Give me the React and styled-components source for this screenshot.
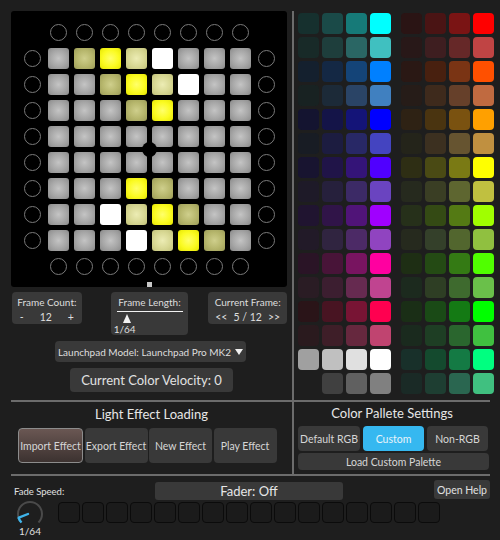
import React from "react";
import styled, { createGlobalStyle } from "styled-components";

const GlobalStyle = createGlobalStyle`
  body {
    margin: 0;
    background: #1e1e1e;
    font-family: Lato, "Liberation Sans", sans-serif;
    color: #dcdcdc;
  }
`;

// pad codes: G gray, W white, 1 dim yellow, 2 light yellow, 3 bright yellow
const PADS = [
  "G132WGGG",
  "GG132WGG",
  "GGG13GGG",
  "GGGGGGGG",
  "GGGGGGGG",
  "GGG31GGG",
  "GGW231GG",
  "GGGW231G",
];

const PAD_BG = {
  G: "radial-gradient(circle, #c4c4c4 0%, #a6a6a6 55%, #898989 100%)",
  W: "#ffffff",
  1: "radial-gradient(circle, #cfcf8c 0%, #b6b66c 55%, #9c9c58 100%)",
  2: "radial-gradient(circle, #ececb4 0%, #d8d894 55%, #c2c27a 100%)",
  3: "radial-gradient(circle, #ffff6a 0%, #fbfb22 55%, #e6e600 100%)",
};

const PALETTE = [
  ["#16302e", "#1a4a48", "#167a78", "#00ffff", "#2a1414", "#4a1414", "#7a1414", "#ff0000"],
  ["#182a28", "#1e3e3c", "#2a6664", "#40c0c0", "#281818", "#3e1e20", "#662828", "#c04444"],
  ["#14202e", "#142844", "#144478", "#0080ff", "#2a1814", "#48200f", "#7a3414", "#ff5000"],
  ["#182222", "#1c2a38", "#2a4466", "#4080c0", "#261c18", "#3e2a1c", "#66402a", "#c06a40"],
  ["#141430", "#141448", "#141478", "#0000ff", "#2e2214", "#4a3410", "#7a5210", "#ffa000"],
  ["#181c24", "#1c1c40", "#282866", "#4444c0", "#24241a", "#3c3020", "#665430", "#c09040"],
  ["#181430", "#201448", "#341478", "#5000ff", "#2e2e14", "#4a4a14", "#7a7a14", "#ffff00"],
  ["#1e1a28", "#26203c", "#3c2a66", "#6a44c0", "#262a1e", "#3a3e24", "#5e6630", "#c0c040"],
  ["#201430", "#301448", "#501478", "#a000ff", "#26301a", "#344a14", "#547a14", "#a0ff00"],
  ["#221a28", "#302440", "#4c2a66", "#9044c0", "#262a1e", "#34402a", "#52662e", "#90c040"],
  ["#2a1426", "#481438", "#781460", "#ff00a0", "#1e2e14", "#244a14", "#347a14", "#50ff00"],
  ["#2a1c24", "#3c1e30", "#662a50", "#c04490", "#1c2a1e", "#2e3e24", "#3e6a2e", "#6ac04a"],
  ["#2a1418", "#481422", "#781434", "#ff0050", "#1a2e16", "#1a4a16", "#147a14", "#00ff00"],
  ["#2a1a1e", "#3e1e28", "#66283e", "#c04470", "#1a2a1e", "#1e3e24", "#2a662e", "#40c040"],
  ["#a0a0a0", "#c0c0c0", "#e0e0e0", "#ffffff", "#18302a", "#144a2e", "#147a44", "#00ff80"],
  [null, "#404040", "#606060", "#808080", "#1a2a26", "#1e3e32", "#2a6650", "#40c080"],
];

const Page = styled.div`
  width: 500px;
  height: 540px;
  overflow: hidden;
  background: #1e1e1e;
`;

const Top = styled.div`
  display: flex;
  height: 389px;
  padding: 11px 0 0 11px;
`;

const LeftCol = styled.div`
  width: 276px;
  display: flex;
  flex-direction: column;
`;

const GridPanel = styled.div`
  position: relative;
  width: 260px;
  height: 260px;
  padding: 8px;
  background: #000;
  border-radius: 3px;
  display: grid;
  grid-template-columns: repeat(10, 26px);
  grid-template-rows: repeat(10, 26px);
`;

const Cell = styled.div`
  display: flex;
  align-items: center;
  justify-content: center;
`;

const Ring = styled.div`
  width: 15px;
  height: 15px;
  border-radius: 50%;
  border: 1px solid #7a7a7a;
`;

const Pad = styled.div`
  width: 21px;
  height: 21px;
  border-radius: 3px;
  background: ${(p) => p.$bg};
`;

const CenterHole = styled.div`
  position: absolute;
  left: 130.5px;
  top: 130.5px;
  width: 15px;
  height: 15px;
  border-radius: 50%;
  background: #000;
`;

const Marker = styled.div`
  position: absolute;
  left: 136px;
  bottom: 0;
  width: 5px;
  height: 5px;
  background: #c8c8c8;
`;

const ControlRow = styled.div`
  display: flex;
  align-items: flex-start;
  margin-top: 5px;
  margin-left: 1px;
`;

const Box = styled.div`
  width: ${(p) => p.$w}px;
  height: ${(p) => p.$h}px;
  margin-left: ${(p) => p.$ml || 0}px;
  background: #393939;
  border-radius: 4px;
  display: flex;
  flex-direction: column;
  align-items: center;
  box-sizing: border-box;
  padding-top: 4px;
  font-size: 10px;
  color: #dedede;
`;

const BoxValue = styled.div`
  display: flex;
  gap: ${(p) => p.$gap}px;
  margin-top: 3px;
  font-size: 10.5px;
`;

const SliderLine = styled.div`
  width: 66px;
  height: 2px;
  background: #f2f2f2;
  margin-top: 3px;
`;

const SliderArea = styled.div`
  align-self: stretch;
  display: flex;
  flex-direction: column;
  padding-left: 12px;
  margin-top: 2px;
`;

const Thumb = styled.div`
  width: 0;
  height: 0;
  border-left: 4.5px solid transparent;
  border-right: 4.5px solid transparent;
  border-bottom: 9px solid #f2f2f2;
`;

const SliderValue = styled.div`
  margin-left: -9px;
  font-size: 10px;
`;

const Dropdown = styled.div`
  width: 191px;
  height: 21px;
  margin: 6px 0 0 44px;
  background: #393939;
  border-radius: 4px;
  display: flex;
  align-items: center;
  justify-content: center;
  gap: 4px;
  font-size: 10px;
  color: #dedede;
`;

const Arrow = styled.div`
  width: 0;
  height: 0;
  border-left: 4px solid transparent;
  border-right: 4px solid transparent;
  border-top: 6px solid #f0f0f0;
`;

const Velocity = styled.div`
  width: 163px;
  height: 24px;
  margin: 6px 0 0 59px;
  background: #393939;
  border-radius: 4px;
  display: flex;
  align-items: center;
  justify-content: center;
  font-size: 13px;
  color: #e2e2e2;
`;

const VDivider = styled.div`
  width: 2px;
  background: #6c6c6c;
  margin-left: ${(p) => p.$ml}px;
`;

const Palette = styled.div`
  display: grid;
  grid-template-columns: repeat(4, 21px) 4px repeat(4, 21px);
  grid-auto-rows: 21px;
  column-gap: 3px;
  row-gap: 3px;
  margin: 2px 0 0 4px;
  align-content: start;
`;

const Swatch = styled.div`
  border-radius: 4px;
  background: ${(p) => p.$c || "transparent"};
`;

const Middle = styled.div`
  display: flex;
  margin: 0 10px 0 11px;
  height: 72px;
  border-top: 2px solid #6c6c6c;
  border-bottom: 2px solid #6c6c6c;
`;

const Section = styled.div`
  width: ${(p) => p.$w}px;
  display: flex;
  flex-direction: column;
  align-items: flex-start;
`;

const Title = styled.div`
  font-size: 13px;
  color: #e6e6e6;
  margin-top: ${(p) => p.$mt}px;
  align-self: center;
`;

const ButtonRow = styled.div`
  display: flex;
  gap: ${(p) => p.$gap}px;
  margin-top: ${(p) => p.$mt}px;
  margin-left: ${(p) => p.$ml || 0}px;
`;

const Btn = styled.div`
  width: ${(p) => p.$w}px;
  height: ${(p) => p.$h}px;
  box-sizing: border-box;
  border-radius: 4px;
  display: flex;
  align-items: center;
  justify-content: center;
  font-size: 10.5px;
  white-space: nowrap;
  color: ${(p) => (p.$active ? "#e8f4fa" : "#d6d6d6")};
  background: ${(p) =>
    p.$active
      ? "#36b8f0"
      : p.$selected
      ? "linear-gradient(#6a5753, #3c3230)"
      : "#393939"};
  border: ${(p) => (p.$selected ? "1px solid #8c8c8c" : "none")};
`;

const Bottom = styled.div`
  display: flex;
  flex-direction: column;
`;

const BottomHead = styled.div`
  display: flex;
  align-items: center;
  height: 26px;
`;

const SmallLabel = styled.div`
  font-size: 9.5px;
  color: #e0e0e0;
  width: 141px;
  padding-left: 14px;
  margin-top: 5px;
`;

const FaderBtn = styled.div`
  width: 188px;
  height: 18px;
  background: #393939;
  border-radius: 3px;
  display: flex;
  align-items: center;
  justify-content: center;
  font-size: 13px;
  color: #e6e6e6;
  margin-top: 3px;
`;

const HelpBtn = styled.div`
  width: 56px;
  height: 19px;
  margin-left: 91px;
  background: #393939;
  border-radius: 3px;
  display: flex;
  align-items: center;
  justify-content: center;
  font-size: 10.5px;
  color: #e0e0e0;
  margin-top: 1px;
`;

const BottomBody = styled.div`
  display: flex;
  align-items: flex-start;
`;

const KnobCol = styled.div`
  width: 58px;
  display: flex;
  flex-direction: column;
  align-items: center;
  padding-left: 2px;
  margin-top: -3px;
  box-sizing: border-box;
`;

const KnobValue = styled.div`
  font-size: 10px;
  color: #e0e0e0;
  margin-top: -4px;
`;

const Steps = styled.div`
  display: flex;
  gap: 2px;
`;

const Step = styled.div`
  width: 22px;
  height: 21px;
  box-sizing: border-box;
  border: 1.5px solid #0b0b0b;
  border-radius: 4px;
  background: #1b1b1b;
`;

function Grid() {
  const cells = [];
  for (let r = 0; r < 10; r++) {
    for (let c = 0; c < 10; c++) {
      const edgeR = r === 0 || r === 9;
      const edgeC = c === 0 || c === 9;
      let content = null;
      if (edgeR && edgeC) content = null;
      else if (edgeR || edgeC) content = <Ring />;
      else content = <Pad $bg={PAD_BG[PADS[r - 1][c - 1]]} />;
      cells.push(<Cell key={`${r}-${c}`}>{content}</Cell>);
    }
  }
  return (
    <GridPanel>
      {cells}
      <CenterHole />
      <Marker />
    </GridPanel>
  );
}

function Knob() {
  return (
    <svg width="30" height="30" viewBox="0 0 30 30">
      <path
        d="M 6.51 23.49 A 12 12 0 1 1 23.49 23.49"
        fill="none"
        stroke="#4a4a4a"
        strokeWidth="2"
      />
      <path
        d="M 6.51 23.49 A 12 12 0 0 1 3.5 18.6"
        fill="none"
        stroke="#3fb4ea"
        strokeWidth="2.4"
      />
      <path d="M 13 15 L 3.8 18.6" stroke="#3fb4ea" strokeWidth="2.4" strokeLinecap="round" />
    </svg>
  );
}

export default function App() {
  return (
    <Page>
      <GlobalStyle />
      <Top>
        <LeftCol>
          <Grid />
          <ControlRow>
            <Box $w={70} $h={32}>
              Frame Count:
              <BoxValue $gap={16}>
                <span>-</span>
                <span>12</span>
                <span>+</span>
              </BoxValue>
            </Box>
            <Box $w={78} $h={43} $ml={29}>
              Frame Length:
              <SliderLine />
              <SliderArea>
                <Thumb />
                <SliderValue>1/64</SliderValue>
              </SliderArea>
            </Box>
            <Box $w={79} $h={32} $ml={20}>
              Current Frame:
              <BoxValue $gap={6}>
                <span>&lt;&lt;</span>
                <span>5 / 12</span>
                <span>&gt;&gt;</span>
              </BoxValue>
            </Box>
          </ControlRow>
          <Dropdown>
            Launchpad Model: Launchpad Pro MK2 <Arrow />
          </Dropdown>
          <Velocity>Current Color Velocity: 0</Velocity>
        </LeftCol>
        <VDivider $ml={5} />
        <Palette>
          {PALETTE.map((row, r) =>
            row.map((c, i) => (
              <React.Fragment key={`${r}-${i}`}>
                {i === 4 && <div />}
                <Swatch $c={c} />
              </React.Fragment>
            ))
          )}
        </Palette>
      </Top>
      <Middle>
        <Section $w={281}>
          <Title $mt={4}>Light Effect Loading</Title>
          <ButtonRow $gap={1.5} $mt={6} $ml={7}>
            <Btn $w={65} $h={35} $selected>
              Import Effect
            </Btn>
            <Btn $w={63} $h={35}>Export Effect</Btn>
            <Btn $w={63} $h={35}>New Effect</Btn>
            <Btn $w={63} $h={35}>Play Effect</Btn>
          </ButtonRow>
        </Section>
        <VDivider $ml={0} />
        <Section $w={196}>
          <Title $mt={3}>Color Pallete Settings</Title>
          <ButtonRow $gap={3} $mt={5} $ml={4}>
            <Btn $w={62} $h={25}>Default RGB</Btn>
            <Btn $w={61} $h={25} $active>
              Custom
            </Btn>
            <Btn $w={61} $h={25}>Non-RGB</Btn>
          </ButtonRow>
          <ButtonRow $gap={0} $mt={2} $ml={4}>
            <Btn $w={191} $h={17}>Load Custom Palette</Btn>
          </ButtonRow>
        </Section>
      </Middle>
      <Bottom>
        <BottomHead>
          <SmallLabel>Fade Speed:</SmallLabel>
          <FaderBtn>Fader: Off</FaderBtn>
          <HelpBtn>Open Help</HelpBtn>
        </BottomHead>
        <BottomBody>
          <KnobCol>
            <Knob />
            <KnobValue>1/64</KnobValue>
          </KnobCol>
          <Steps>
            {Array.from({ length: 16 }).map((_, i) => (
              <Step key={i} />
            ))}
          </Steps>
        </BottomBody>
      </Bottom>
    </Page>
  );
}
